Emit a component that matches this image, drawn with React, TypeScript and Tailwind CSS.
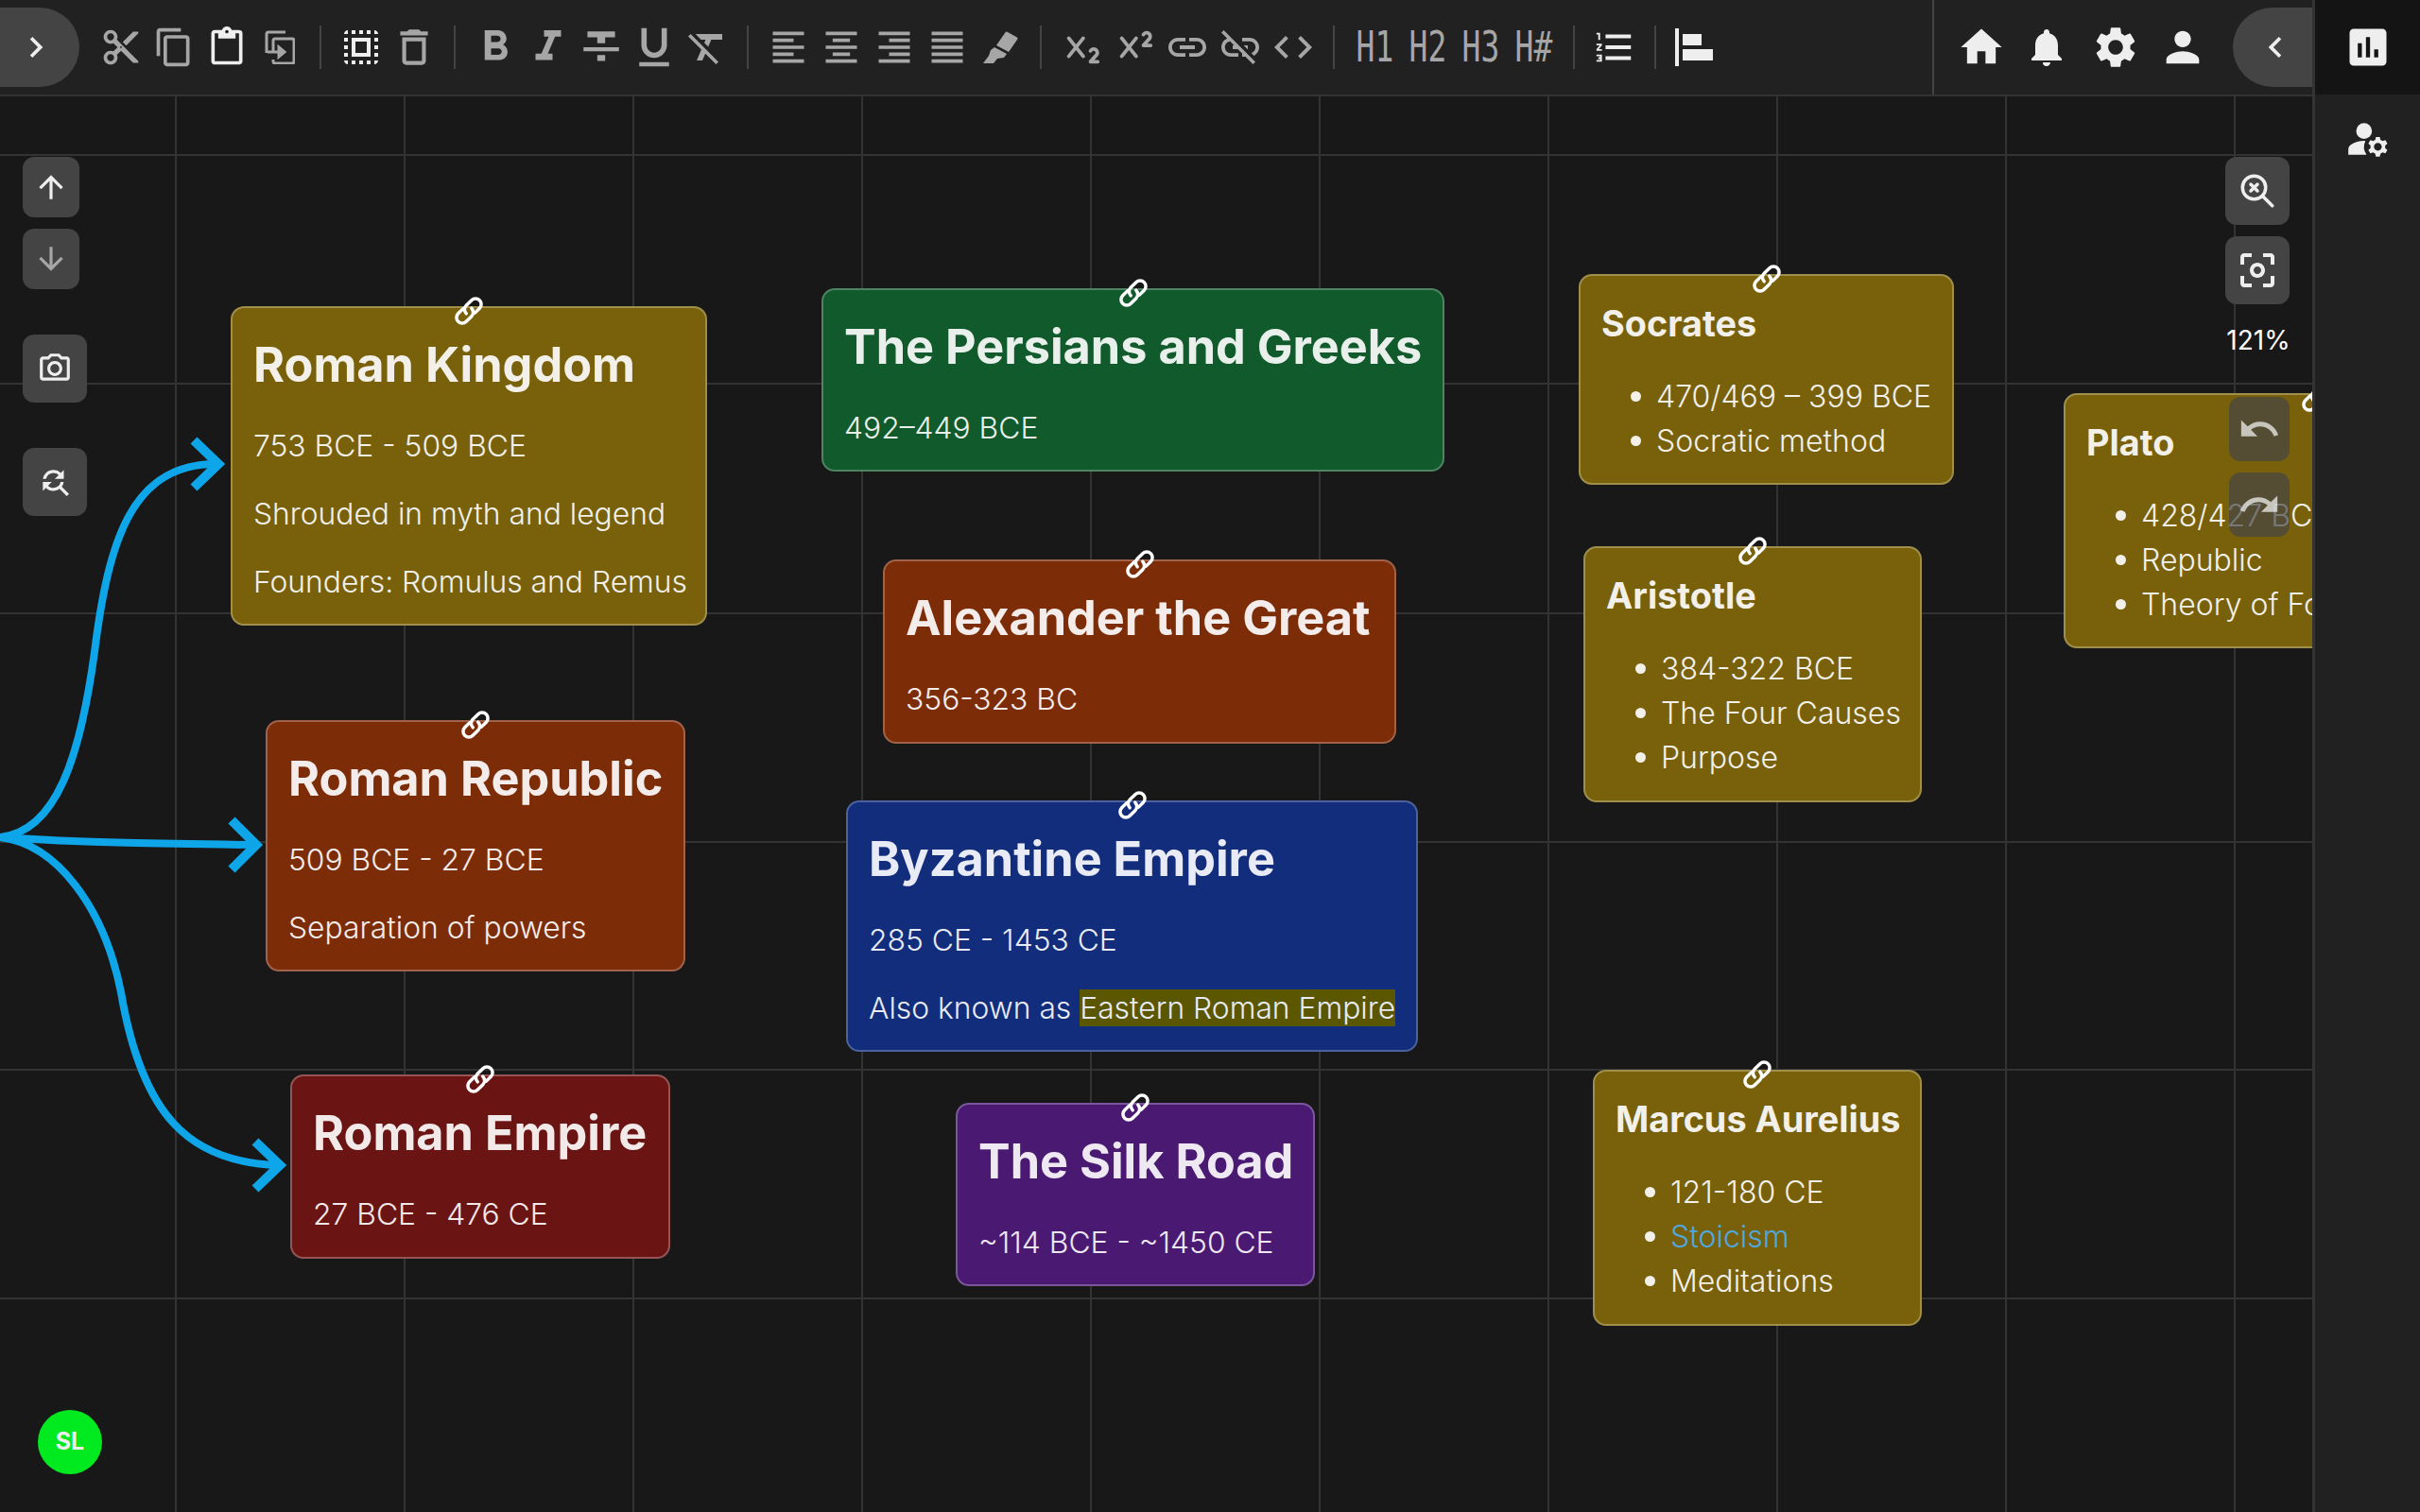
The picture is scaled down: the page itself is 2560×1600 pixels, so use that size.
import type { ReactNode } from 'react'
import {
  MdContentCut,
  MdOutlineContentCopy,
  MdContentPaste,
  MdSelectAll,
  MdOutlineDelete,
  MdFormatBold,
  MdFormatItalic,
  MdFormatStrikethrough,
  MdFormatUnderlined,
  MdFormatClear,
  MdFormatAlignLeft,
  MdFormatAlignCenter,
  MdFormatAlignRight,
  MdFormatAlignJustify,
  MdLink,
  MdLinkOff,
  MdCode,
  MdFormatListNumbered,
  MdHome,
  MdNotifications,
  MdSettings,
  MdPerson,
  MdChevronLeft,
  MdChevronRight,
  MdAssessment,
  MdManageAccounts,
  MdArrowUpward,
  MdArrowDownward,
  MdOutlinePhotoCamera,
  MdFindReplace,
  MdCenterFocusWeak,
  MdUndo,
  MdRedo,
} from 'react-icons/md'
import { TbSubscript, TbSuperscript, TbZoomCancel } from 'react-icons/tb'

function Sep() {
  return <div className="mx-[14px] h-[46px] w-[2px] bg-[#444444]" />
}

function Tool({ children, on }: { children: ReactNode; on?: boolean }) {
  return (
    <div className={`flex w-[56px] items-center justify-center text-[44px] ${on ? 'text-[#eeeeee]' : 'text-[#a6a6a6]'}`}>
      {children}
    </div>
  )
}

function Heading({ label }: { label: string }) {
  return (
    <Tool>
      <span className="scale-x-75 font-['DejaVu_Sans_Mono',monospace] text-[44px] font-normal leading-none">{label}</span>
    </Tool>
  )
}

function DuplicateIcon() {
  return (
    <svg width="32" height="36" viewBox="0 0 32 36" fill="none" stroke="currentColor" strokeWidth="3">
      <path d="M22 2H4a2 2 0 0 0-2 2v20" />
      <path d="M9 24V11a2 2 0 0 1 2-2h18a2 2 0 0 1 2 2v22a2 2 0 0 1-2 2H11a2 2 0 0 1-2-2v-2" />
      <path d="M3 23h14" />
      <path d="M15 18l6 5-6 5z" fill="currentColor" />
    </svg>
  )
}

function MarkerIcon() {
  return (
    <svg width="38" height="34" viewBox="0 0 38 34" fill="currentColor">
      <path d="M27 1l9 5a2 2 0 0 1 1 3l-9 13-13-7 9-13a2 2 0 0 1 3-1z" />
      <path d="M13 17l13 7-3 4-7 1-4 5H1l6-8 2-6z" />
    </svg>
  )
}

function AlignIcon() {
  return (
    <svg width="44" height="40" viewBox="0 0 44 40" fill="currentColor">
      <rect x="0" y="0" width="4" height="40" />
      <rect x="8" y="6" width="20" height="12" />
      <rect x="8" y="22" width="32" height="12" />
    </svg>
  )
}

function ChainIcon() {
  return (
    <svg width="36" height="36" viewBox="0 0 36 36" fill="none" stroke="currentColor" strokeWidth="3.5" strokeLinecap="round">
      <g transform="rotate(-45 18 18)">
        <path d="M15 12H8a6 6 0 0 0 0 12h8a6 6 0 0 0 6-6" />
        <path d="M21 24h7a6 6 0 0 0 0-12h-8a6 6 0 0 0-6 6" />
      </g>
    </svg>
  )
}

function Toolbar() {
  return (
    <div className="flex h-[102px] items-center border-b-2 border-[#333333] bg-[#212121]">
      <div className="flex h-[84px] w-[84px] items-center justify-end rounded-r-[42px] bg-[#444444] pr-[24px] text-[44px] text-[#eeeeee]">
        <MdChevronRight />
      </div>
      <div className="ml-[16px] flex items-center">
        <Tool><MdContentCut /></Tool>
        <Tool><MdOutlineContentCopy /></Tool>
        <Tool on><MdContentPaste /></Tool>
        <Tool><DuplicateIcon /></Tool>
        <Sep />
        <Tool on><MdSelectAll className="text-[48px]" /></Tool>
        <Tool><MdOutlineDelete className="text-[50px]" /></Tool>
        <Sep />
        <Tool><MdFormatBold className="text-[54px]" /></Tool>
        <Tool><MdFormatItalic className="text-[54px]" /></Tool>
        <Tool><MdFormatStrikethrough className="text-[50px]" /></Tool>
        <Tool><MdFormatUnderlined className="text-[54px]" /></Tool>
        <Tool><MdFormatClear className="text-[48px]" /></Tool>
        <Sep />
        <Tool><MdFormatAlignLeft /></Tool>
        <Tool><MdFormatAlignCenter /></Tool>
        <Tool><MdFormatAlignRight /></Tool>
        <Tool><MdFormatAlignJustify /></Tool>
        <Tool><MarkerIcon /></Tool>
        <Sep />
        <Tool><TbSubscript className="text-[46px]" /></Tool>
        <Tool><TbSuperscript className="text-[46px]" /></Tool>
        <Tool><MdLink className="text-[48px]" /></Tool>
        <Tool><MdLinkOff className="text-[48px]" /></Tool>
        <Tool><MdCode className="text-[48px]" /></Tool>
        <Sep />
        <Heading label="H1" />
        <Heading label="H2" />
        <Heading label="H3" />
        <Heading label="H#" />
        <Sep />
        <Tool on><MdFormatListNumbered className="text-[46px]" /></Tool>
        <Sep />
        <Tool on><AlignIcon /></Tool>
      </div>
      <div className="ml-auto flex h-full items-center border-l-[2px] border-[#444444] pl-[24px]">
        <div className="w-[71px] text-[52px] text-[#eeeeee]"><MdHome /></div>
        <div className="w-[71px] text-[48px] text-[#eeeeee]"><MdNotifications /></div>
        <div className="w-[71px] text-[52px] text-[#eeeeee]"><MdSettings /></div>
        <div className="w-[71px] text-[52px] text-[#eeeeee]"><MdPerson /></div>
        <div className="ml-[8px] flex h-[84px] w-[84px] items-center justify-start rounded-l-[42px] bg-[#444444] pl-[23px] text-[44px] text-[#eeeeee]">
          <MdChevronLeft />
        </div>
      </div>
    </div>
  )
}

function FloatBtn({ x, y, w, h, faded, children }: { x: number; y: number; w: number; h: number; faded?: boolean; children: ReactNode }) {
  return (
    <div
      className={`absolute flex items-center justify-center rounded-[12px] text-[38px] ${faded ? 'bg-[#444444]/70 text-[#eeeeee]/75' : 'bg-[#444444] text-[#eeeeee]'}`}
      style={{ left: x, top: y, width: w, height: h }}
    >
      {children}
    </div>
  )
}

type CardProps = {
  x: number
  y: number
  w: number
  h: number
  bg: string
  title: string
  small?: boolean
  children: ReactNode
}

const cardStyles: Record<string, string> = {
  yellow: 'bg-[#78610a] border-[#a08f4a] text-[#f2f0e9]',
  green: 'bg-[#115a2c] border-[#4d8462] text-[#e9f0ec]',
  orange: 'bg-[#7c2d07] border-[#a0624a] text-[#f4ecea]',
  blue: 'bg-[#112d7b] border-[#4a639f] text-[#e8ebf5]',
  red: 'bg-[#6b1414] border-[#965555] text-[#f2e9e9]',
  purple: 'bg-[#4a1a72] border-[#7a569a] text-[#eee8f2]',
}

function Card({ x, y, w, h, bg, title, small, children }: CardProps) {
  return (
    <div
      className={`absolute rounded-[14px] border-2 px-[22px] ${cardStyles[bg]}`}
      style={{ left: x, top: y, width: w, height: h }}
    >
      <div className="absolute left-1/2 top-[-15px] -translate-x-1/2 text-white">
        <ChainIcon />
      </div>
      {small ? (
        <div className="whitespace-nowrap pb-[9px] pt-[27px] text-[37.8px] font-bold leading-[46px]">{title}</div>
      ) : (
        <div className="whitespace-nowrap pb-[7px] pt-[30px] text-[50.4px] font-bold leading-[60px]">{title}</div>
      )}
      {children}
    </div>
  )
}

function Para({ children }: { children: ReactNode }) {
  return <p className="mt-[26px] whitespace-nowrap text-[31.8px] font-light leading-[46px]">{children}</p>
}

function Bullets({ items }: { items: ReactNode[] }) {
  return (
    <ul className="mt-[22px] whitespace-nowrap pl-[58px] text-[32px] font-light leading-[47px]">
      {items.map((it, i) => (
        <li key={i} className="relative">
          <span className="absolute left-[-27px] top-[18px] h-[11px] w-[11px] rounded-full bg-[#f2f0e9]" />
          {it}
        </li>
      ))}
    </ul>
  )
}

function Arrows() {
  return (
    <svg className="absolute left-0 top-0" width="2446" height="1600" fill="none" stroke="#0ea5e9" strokeWidth="8">
      <path d="M0 886C60 880 85 800 100 690C115 570 140 490 230 491" />
      <path d="M0 886C90 892 180 893 266 894" />
      <path d="M0 886C60 893 110 960 128 1050C150 1180 200 1230 294 1233" />
      <path d="M205 466L231 491L205 516" strokeWidth="10" />
      <path d="M245 868L271 894L245 920" strokeWidth="10" />
      <path d="M270 1208L296 1233L270 1258" strokeWidth="10" />
    </svg>
  )
}

export default function App() {
  const xs = [185, 427, 669, 911, 1153, 1395, 1637, 1879, 2121, 2363]
  const ys = [163, 405, 648, 890, 1131, 1373]

  return (
    <div className="flex h-[1600px] w-[2560px] overflow-hidden bg-[#181818] font-['Inter',sans-serif]">
      <div className="relative h-full w-[2446px] overflow-hidden">
        {xs.map((x) => (
          <div key={x} className="absolute bottom-0 top-0 w-[2px] bg-[#333333]" style={{ left: x }} />
        ))}
        {ys.map((y) => (
          <div key={y} className="absolute left-0 right-0 h-[2px] bg-[#333333]" style={{ top: y }} />
        ))}

        <Arrows />

        <Card x={244} y={324} w={504} h={338} bg="yellow" title="Roman Kingdom">
          <Para>753 BCE - 509 BCE</Para>
          <Para>Shrouded in myth and legend</Para>
          <Para>Founders: Romulus and Remus</Para>
        </Card>
        <Card x={281} y={762} w={444} h={266} bg="orange" title="Roman Republic">
          <Para>509 BCE - 27 BCE</Para>
          <Para>Separation of powers</Para>
        </Card>
        <Card x={307} y={1137} w={402} h={195} bg="red" title="Roman Empire">
          <Para>27 BCE - 476 CE</Para>
        </Card>
        <Card x={869} y={305} w={659} h={194} bg="green" title="The Persians and Greeks">
          <Para>492–449 BCE</Para>
        </Card>
        <Card x={934} y={592} w={543} h={195} bg="orange" title="Alexander the Great">
          <Para>356-323 BC</Para>
        </Card>
        <Card x={895} y={847} w={605} h={266} bg="blue" title="Byzantine Empire">
          <Para>285 CE - 1453 CE</Para>
          <Para>
            Also known as <span className="bg-[#5a5700]">Eastern Roman Empire</span>
          </Para>
        </Card>
        <Card x={1011} y={1167} w={380} h={194} bg="purple" title="The Silk Road">
          <Para>~114 BCE - ~1450 CE</Para>
        </Card>
        <Card x={1670} y={290} w={397} h={223} bg="yellow" title="Socrates" small>
          <Bullets items={['470/469 – 399 BCE', 'Socratic method']} />
        </Card>
        <Card x={1675} y={578} w={358} h={271} bg="yellow" title="Aristotle" small>
          <Bullets items={['384-322 BCE', 'The Four Causes', 'Purpose']} />
        </Card>
        <Card x={1685} y={1132} w={348} h={271} bg="yellow" title="Marcus Aurelius" small>
          <Bullets items={['121-180 CE', <span className="text-[#4fa8e0]">Stoicism</span>, 'Meditations']} />
        </Card>
        <Card x={2183} y={416} w={534} h={270} bg="yellow" title="Plato" small>
          <Bullets items={['428/427 BCE', 'Republic', 'Theory of Forms']} />
        </Card>

        <div className="absolute left-0 right-0 top-0">
          <Toolbar />
        </div>

        <FloatBtn x={24} y={166} w={60} h={64}><MdArrowUpward /></FloatBtn>
        <FloatBtn x={24} y={242} w={60} h={64}><span className="text-[#a6a6a6]"><MdArrowDownward /></span></FloatBtn>
        <FloatBtn x={24} y={354} w={68} h={72}><MdOutlinePhotoCamera /></FloatBtn>
        <FloatBtn x={24} y={474} w={68} h={72}><MdFindReplace /></FloatBtn>
        <FloatBtn x={2354} y={166} w={68} h={72}><TbZoomCancel className="text-[42px]" /></FloatBtn>
        <FloatBtn x={2354} y={250} w={68} h={72}><MdCenterFocusWeak className="text-[48px]" /></FloatBtn>
        <div className="absolute left-[2344px] top-[342px] w-[90px] text-center text-[28px] leading-[36px] text-white">121%</div>
        <FloatBtn x={2358} y={420} w={64} h={68} faded><MdUndo className="text-[46px]" /></FloatBtn>
        <FloatBtn x={2358} y={500} w={64} h={68} faded><MdRedo className="text-[46px]" /></FloatBtn>

        <div className="absolute left-[40px] top-[1492px] flex h-[68px] w-[68px] items-center justify-center rounded-full bg-[#00ea1f] text-[25px] font-bold text-[#eeeeee]">
          SL
        </div>
      </div>

      <div className="flex h-full w-[114px] flex-col items-center border-l-[3px] border-[#333333] bg-[#212121]">
        <div className="flex h-[100px] w-full items-center justify-center bg-[#141414] text-[52px] text-[#eeeeee]">
          <MdAssessment />
        </div>
        <div className="mt-[22px] text-[50px] text-[#eeeeee]">
          <MdManageAccounts />
        </div>
      </div>
    </div>
  )
}
